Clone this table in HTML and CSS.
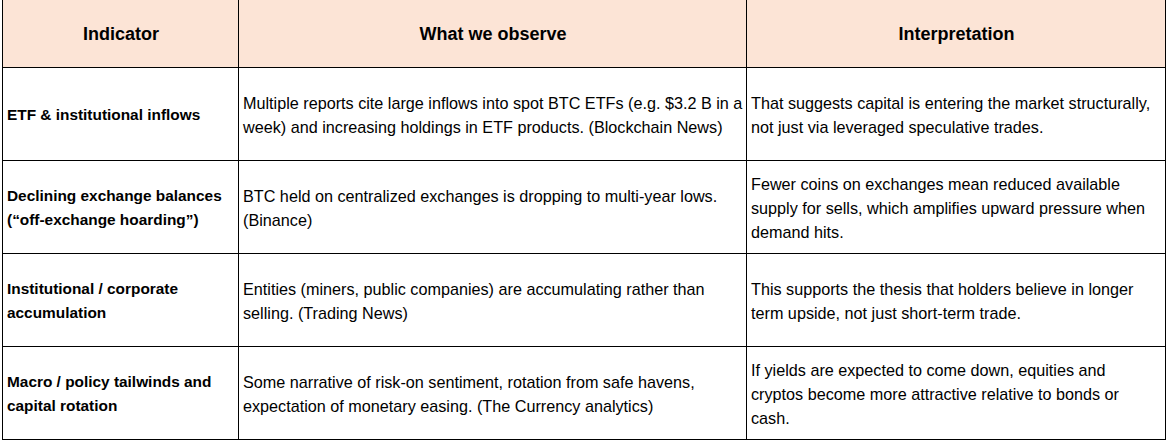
FILE: index.html
```html
<!DOCTYPE html>
<html>
<head>
<meta charset="utf-8">
<link rel="stylesheet" href="styles.css">
</head>
<body>
<table class="grid">
  <colgroup>
    <col class="c1"><col class="c2"><col class="c3">
  </colgroup>
  <thead>
    <tr>
      <th>Indicator</th>
      <th>What we observe</th>
      <th>Interpretation</th>
    </tr>
  </thead>
  <tbody>
    <tr>
      <td class="ind">ETF &amp; institutional inflows</td>
      <td>Multiple reports cite large inflows into spot BTC ETFs (e.g. $3.2 B in a<br>week) and increasing holdings in ETF products. (Blockchain News)</td>
      <td>That suggests capital is entering the market structurally,<br>not just via leveraged speculative trades.</td>
    </tr>
    <tr>
      <td class="ind">Declining exchange balances<br>(“off-exchange hoarding”)</td>
      <td>BTC held on centralized exchanges is dropping to multi-year lows.<br>(Binance)</td>
      <td>Fewer coins on exchanges mean reduced available<br>supply for sells, which amplifies upward pressure when<br>demand hits.</td>
    </tr>
    <tr>
      <td class="ind">Institutional / corporate<br>accumulation</td>
      <td>Entities (miners, public companies) are accumulating rather than<br>selling. (Trading News)</td>
      <td>This supports the thesis that holders believe in longer<br>term upside, not just short-term trade.</td>
    </tr>
    <tr>
      <td class="ind">Macro / policy tailwinds and<br>capital rotation</td>
      <td>Some narrative of risk-on sentiment, rotation from safe havens,<br>expectation of monetary easing. (The Currency analytics)</td>
      <td>If yields are expected to come down, equities and<br>cryptos become more attractive relative to bonds or<br>cash.</td>
    </tr>
  </tbody>
</table>
</body>
</html>
```

FILE: styles.css
```css
html, body {
  margin: 0;
  padding: 0;
  background: #ffffff;
}

body {
  font-family: "Liberation Sans", Arial, sans-serif;
  color: #000000;
  font-size: 16.2px;
}

.grid {
  border-collapse: collapse;
  table-layout: fixed;
  width: 1163px;
  margin-left: 2px;
}

.c1 { width: 236px; }
.c2 { width: 508px; }
.c3 { width: 419px; }

.grid th,
.grid td {
  border: 1px solid #000000;
  vertical-align: middle;
  padding: 1px 3px 0 4px;
  line-height: 24px;
  white-space: nowrap;
  overflow: hidden;
}

.grid thead th {
  background: #fce4d6;
  height: 66px;
  border-top: none;
  font-size: 18px;
  font-weight: bold;
  text-align: center;
}

.grid tbody td {
  height: 91px;
  text-align: left;
}

.grid td.ind {
  font-weight: bold;
  font-size: 15.4px;
  padding-left: 4px;
}
```
